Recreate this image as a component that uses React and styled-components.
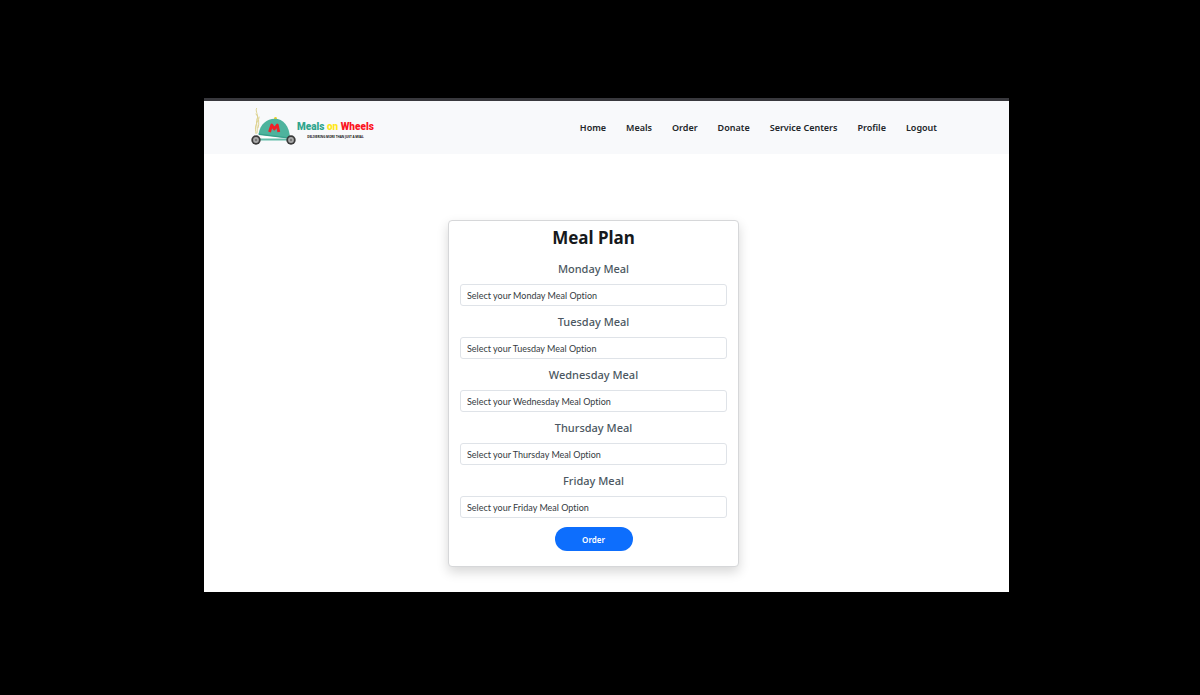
import React from "react";
import styled, { createGlobalStyle } from "styled-components";

const GlobalStyle = createGlobalStyle`
  *, *::before, *::after { box-sizing: border-box; }
  body {
    margin: 0;
    background: #000;
    color: #212529;
    font-family: "Noto Sans", "Open Sans", sans-serif;
  }
`;

const Backdrop = styled.div`
  padding: 98px 191px 98px 17%;
`;

const Page = styled.div`
  background: #fff;
  border-top: 3px solid #38383d;
`;

const Header = styled.header`
  display: flex;
  align-items: center;
  justify-content: space-between;
  height: 53px;
  padding: 0 72px 0 47px;
  background: #f8f9fb;
`;

const Brand = styled.a`
  display: flex;
  align-items: center;
  text-decoration: none;
`;

const BrandText = styled.span`
  display: flex;
  flex-direction: column;
  align-items: center;
  padding-top: 4px;
`;

const BrandName = styled.span`
  font: 900 10px/14px Roboto, "Liberation Sans", sans-serif;
  color: #2fa58d;
  white-space: nowrap;
`;

const Tint = styled.span`
  color: ${({ $color }) => $color};
`;

const Tagline = styled.span`
  font: 700 3px/6px "Noto Sans", sans-serif;
  color: #111;
  white-space: nowrap;
`;

const Nav = styled.nav`
  display: flex;
  gap: 20px;
`;

const NavLink = styled.a`
  font-size: 9px;
  line-height: 16px;
  font-weight: 600;
  color: #212529;
  text-decoration: none;
  white-space: nowrap;
`;

const Content = styled.main`
  display: flex;
  justify-content: center;
  padding: 66px 26px 25px 0;
`;

const Card = styled.form`
  display: flex;
  flex-direction: column;
  align-items: center;
  width: 291px;
  padding: 5px 11px 15px;
  border: 1px solid #d6d7d9;
  border-radius: 4px;
  background: #fff;
  box-shadow: 0 5px 12px rgba(0, 0, 0, 0.16);
`;

const Title = styled.h1`
  margin: 0 0 10px;
  font-size: 17px;
  line-height: 24px;
  font-weight: 700;
  color: #16191c;
`;

const Fields = styled.div`
  display: grid;
  gap: 7px;
  width: 100%;
  margin-bottom: 9px;
`;

const Field = styled.div`
  display: grid;
  gap: 6px;
`;

const Label = styled.label`
  font-size: 11px;
  line-height: 18px;
  font-weight: 500;
  text-align: center;
  color: #4b5761;
`;

const Select = styled.select`
  appearance: none;
  width: 100%;
  height: 22px;
  padding: 0 6px;
  border: 1px solid #dfe3e8;
  border-radius: 3px;
  background: #fff;
  color: #353b41;
  font-family: Lato, sans-serif;
  font-size: 9px;
  font-variant-ligatures: none;
`;

const OrderButton = styled.button`
  width: 78px;
  height: 24px;
  padding: 1px 0 0;
  border: 0;
  border-radius: 12px;
  background: #0d6efd;
  color: #fff;
  font-family: inherit;
  font-size: 8px;
  font-weight: 600;
`;

const links = ["Home", "Meals", "Order", "Donate", "Service Centers", "Profile", "Logout"];
const days = ["Monday", "Tuesday", "Wednesday", "Thursday", "Friday"];

function Wheel({ cx }) {
  return (
    <g>
      <circle cx={cx} cy="32" r="4.7" fill="#3a3a3a" />
      <circle cx={cx} cy="32" r="2.9" fill="#aaa" />
      <circle cx={cx} cy="32" r="1.2" fill="#777" />
    </g>
  );
}

function CartLogo() {
  return (
    <svg width="46" height="40" viewBox="0 0 46 40" aria-hidden="true">
      <g fill="none" stroke="#ddd28e" strokeWidth="1" strokeLinecap="round">
        <path d="M5.500 0.500C4 4 8 7 6 11C4.500 15 7 18 6 25" />
        <path d="M5 6C8.500 10 6.500 13 5 17C4 20 4.500 22 5 25.500" />
        <path d="M8 9C6.500 13 9 15 7 20" />
      </g>
      <circle cx="24.500" cy="10.500" r="1.400" fill="#e9cf27" />
      <path d="M7.500 26.500C9 16 16 10.800 23.500 10.800C32.500 10.800 38.500 18 39 30.500Z" fill="#4db39d" />
      <path d="M11 28L36 31H11Z" fill="#fff" />
      <path d="M7.500 25.500L39 29.500V30.700L8 27Z" fill="#35a18b" />
      <path d="M9 30.500H36V32.500H9Z" fill="#63bca9" />
      <path d="M18.500 24L20.800 17L23.300 21L26.300 17L27.800 24" fill="none" stroke="#ee2027" strokeWidth="2.800" strokeLinejoin="round" />
      <Wheel cx={5} />
      <Wheel cx={40} />
    </svg>
  );
}

export default function App() {
  return (
    <>
      <GlobalStyle />
      <Backdrop>
        <Page>
          <Header>
            <Brand href="#home">
              <CartLogo />
              <BrandText>
                <BrandName>
                  Meals <Tint $color="#ffe81a">on</Tint> <Tint $color="#fb1422">Wheels</Tint>
                </BrandName>
                <Tagline>DELIVERING MORE THAN JUST A MEAL</Tagline>
              </BrandText>
            </Brand>
            <Nav>
              {links.map((text) => (
                <NavLink key={text} href="#">{text}</NavLink>
              ))}
            </Nav>
          </Header>
          <Content>
            <Card>
              <Title>Meal Plan</Title>
              <Fields>
                {days.map((day) => (
                  <Field key={day}>
                    <Label htmlFor={day}>{day} Meal</Label>
                    <Select id={day}>
                      <option>Select your {day} Meal Option</option>
                    </Select>
                  </Field>
                ))}
              </Fields>
              <OrderButton type="button">Order</OrderButton>
            </Card>
          </Content>
        </Page>
      </Backdrop>
    </>
  );
}
